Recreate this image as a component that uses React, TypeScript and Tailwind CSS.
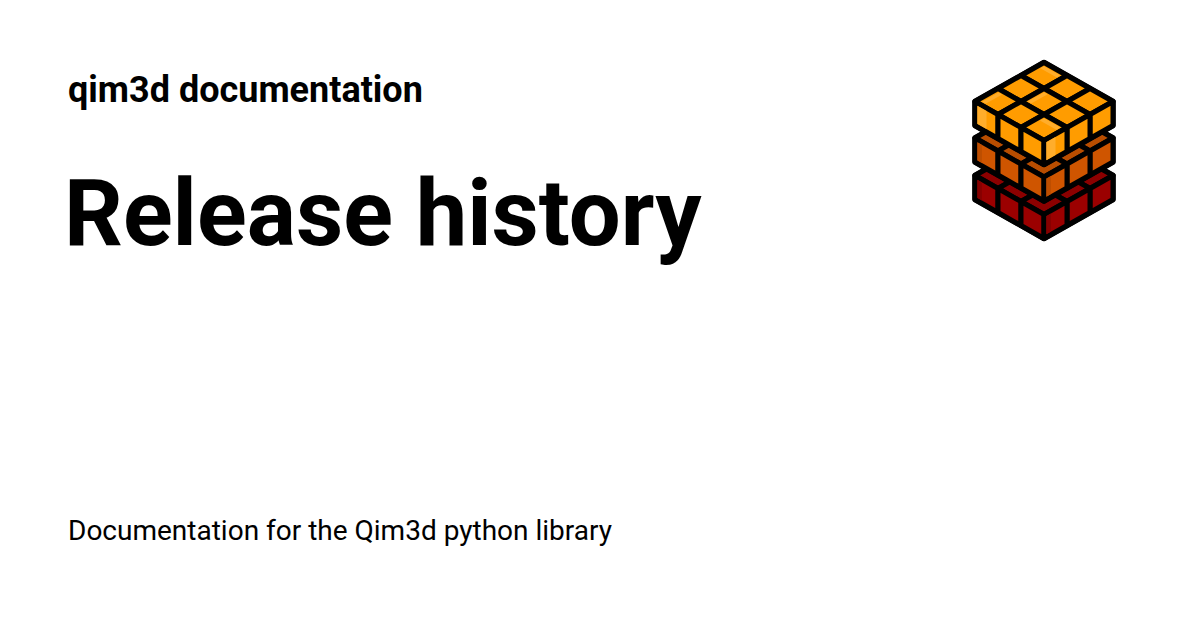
const OX = 75;
const OY = 6.5;
const CELL_X = 23;
const CELL_Y = 13;
const DEPTH = 24;

// isometric point: u runs to the right corner, v to the left corner, z goes down
const pt = (u: number, v: number, z: number) =>
  `${OX + (u - v) * CELL_X},${OY + (u + v) * CELL_Y + z}`;

const poly = (points: string[]) => points.join(' ');

const idx = [0, 1, 2];

type LayerProps = {
  z: number;
  top: string;
  side: string;
  shade: string;
  strip: number;
  highlight?: boolean;
};

const Layer = ({ z, top, side, shade, strip, highlight }: LayerProps) => (
  <g stroke="#000" strokeWidth={5} strokeLinejoin="round" strokeLinecap="round">
    {/* outer silhouette, gives the rounded corners */}
    <polygon
      points={poly([pt(0, 0, z), pt(3, 0, z), pt(3, 0, z + DEPTH), pt(3, 3, z + DEPTH), pt(0, 3, z + DEPTH), pt(0, 3, z)])}
      fill={side}
      strokeWidth={5.5}
    />
    {idx.flatMap((u) =>
      idx.map((v) => (
        <polygon
          key={`t${u}${v}`}
          points={poly([pt(u, v, z), pt(u + 1, v, z), pt(u + 1, v + 1, z), pt(u, v + 1, z)])}
          fill={top}
        />
      ))
    )}
    {idx.map((i) => (
      <polygon
        key={`l${i}`}
        points={poly([pt(i, 3, z), pt(i + 1, 3, z), pt(i + 1, 3, z + DEPTH), pt(i, 3, z + DEPTH)])}
        fill={side}
      />
    ))}
    {idx.map((i) => (
      <polygon
        key={`r${i}`}
        points={poly([pt(3, i, z), pt(3, i + 1, z), pt(3, i + 1, z + DEPTH), pt(3, i, z + DEPTH)])}
        fill={side}
      />
    ))}
    {/* shading strips on the side faces */}
    <g stroke="none">
      <polygon
        points={poly([pt(0.1, 3, z + 3), pt(0.1 + strip, 3, z + 3), pt(0.1 + strip, 3, z + DEPTH - 3), pt(0.1, 3, z + DEPTH - 3)])}
        fill={shade}
      />
      <polygon
        points={poly([pt(3, 2.9, z + 3), pt(3, 2.9 - strip, z + 3), pt(3, 2.9 - strip, z + DEPTH - 3), pt(3, 2.9, z + DEPTH - 3)])}
        fill={shade}
      />
      {highlight && (
        <>
          <polygon points={poly([pt(0.14, 0.14, z), pt(0.86, 0.14, z), pt(0.86, 0.3, z), pt(0.14, 0.3, z)])} fill={shade} />
          <polygon points={poly([pt(0.16, 2.14, z), pt(0.32, 2.14, z), pt(0.32, 2.86, z), pt(0.16, 2.86, z)])} fill={shade} />
          <polygon points={poly([pt(1.14, 1.14, z), pt(1.3, 1.14, z), pt(1.3, 1.86, z), pt(1.14, 1.86, z)])} fill={shade} />
          <polygon points={poly([pt(2.14, 2.14, z), pt(2.86, 2.14, z), pt(2.86, 2.32, z), pt(2.14, 2.32, z)])} fill={shade} />
        </>
      )}
    </g>
  </g>
);

const Logo = () => (
  <svg width="150" height="190" viewBox="0 0 150 190" className="block">
    <Layer z={74} top="#8c0000" side="#9b0000" shade="#860000" strip={0.2} />
    <Layer z={36.5} top="#b84d00" side="#cf5500" shade="#bd4e00" strip={0.2} />
    <Layer z={0} top="#ff9c00" side="#ff9c00" shade="#ffad2b" strip={0.4} highlight />
  </svg>
);

const App = () => {
  return (
    <div className="flex w-[1200px] h-[630px] overflow-hidden bg-white text-black font-['Roboto',sans-serif]">
      <div className="flex flex-col w-[900px] pl-[68px]">
        <div className="mt-[68px] text-[36px] leading-[44px] font-bold">qim3d documentation</div>
        <h1 className="mt-[47px] -ml-[4px] text-[92px] leading-[110px] font-bold">Release history</h1>
        <p className="mt-[244px] text-[28px] leading-[36px]">Documentation for the Qim3d python library</p>
      </div>
      <div className="ml-[69px] mt-[56px]">
        <Logo />
      </div>
    </div>
  );
};

export default App;
